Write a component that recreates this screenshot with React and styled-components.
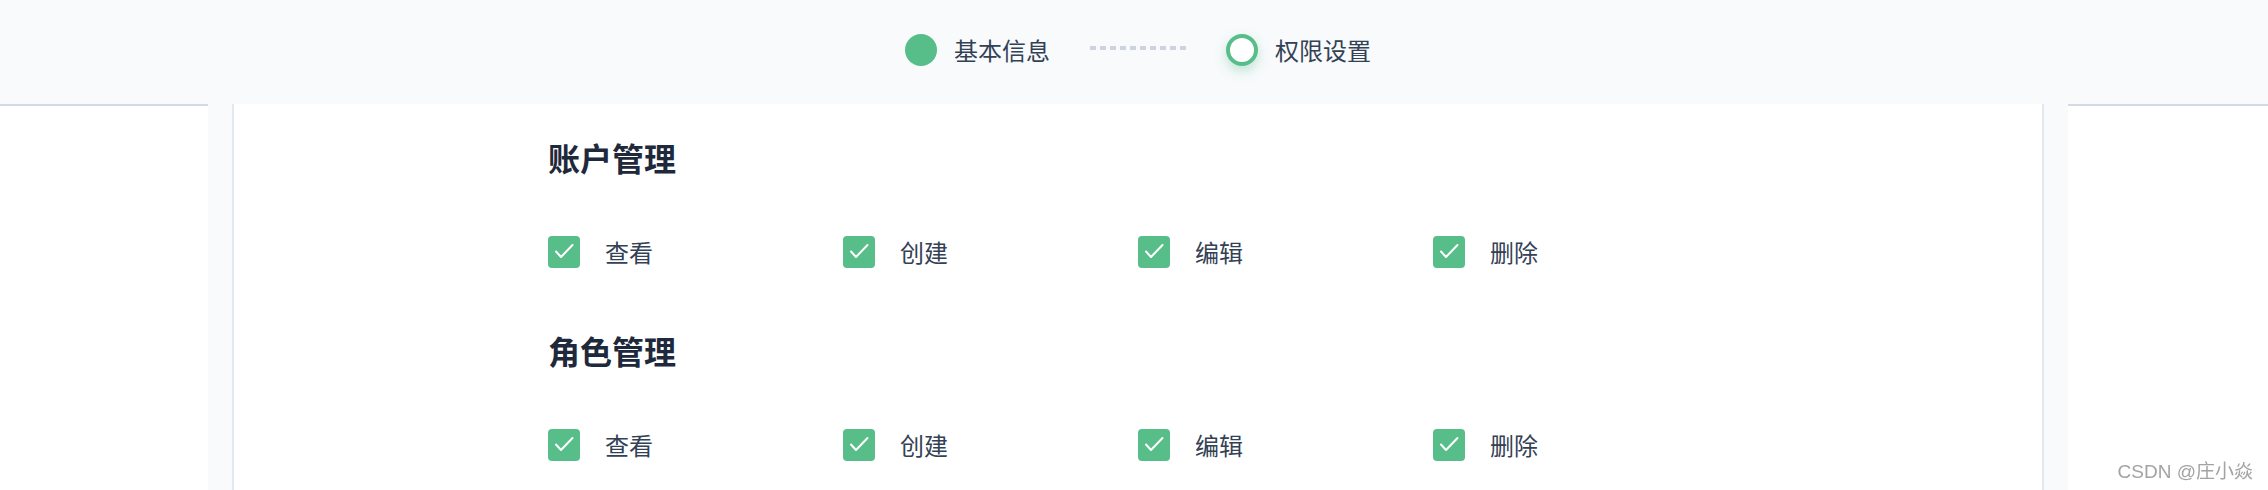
import React from "react";
import styled, { createGlobalStyle } from "styled-components";

const GREEN = "#58be89";

const Global = createGlobalStyle`
  html, body { margin: 0; padding: 0; background: #ffffff; }
  body {
    font-family: "Noto Sans CJK SC", "Noto Sans", sans-serif;
    color: #334155;
    overflow: hidden;
  }
  * { box-sizing: border-box; }
`;

const Page = styled.div`
  min-height: 100vh;
  background: #ffffff;
`;

const Header = styled.header`
  height: 104px;
  background: #f8fafc;
  padding: 0 200px 4px 208px;
  display: flex;
  align-items: center;
  justify-content: center;
`;

const Stepper = styled.div`
  display: flex;
  align-items: center;
  gap: 40px;
`;

const Step = styled.div`
  display: flex;
  align-items: center;
  gap: 17px;
`;

const Dot = styled.span`
  width: 32px;
  height: 32px;
  border-radius: 50%;
  flex: none;
  background: ${(p) => (p.$active ? "#ffffff" : GREEN)};
  border: ${(p) => (p.$active ? `4px solid ${GREEN}` : "none")};
  box-shadow: ${(p) => (p.$active ? "0 5px 12px rgba(88, 190, 137, 0.35)" : "none")};
`;

const StepLabel = styled.span`
  font-size: 24px;
  line-height: 32px;
  color: #334155;
`;

const Connector = styled.span`
  width: 96px;
  height: 4px;
  margin-top: -4px;
  background: repeating-linear-gradient(
    to right,
    #cdd4de 0 6px,
    transparent 6px 10px
  );
`;

const Main = styled.main`
  border-top: 2px solid #d3dae2;
  padding: 0 200px 0 208px;
  display: flex;
`;

const Panel = styled.div`
  flex: 1;
  margin-top: -2px;
  background: #f8fafc;
  padding: 0 24px;
  display: flex;
`;

const Card = styled.section`
  flex: 1;
  background: #ffffff;
  border-left: 2px solid #e2e8f0;
  border-right: 2px solid #e2e8f0;
  padding: 29px 0 80px;
  min-height: 420px;
`;

const Content = styled.div`
  width: 1180px;
  margin: 0 auto;
  display: flex;
  flex-direction: column;
  gap: 58px;
`;

const Group = styled.div`
  display: flex;
  flex-direction: column;
  gap: 55px;
`;

const GroupTitle = styled.h3`
  margin: 0;
  font-size: 32px;
  line-height: 48px;
  font-weight: 700;
  color: #1e293b;
`;

const Options = styled.div`
  display: grid;
  grid-template-columns: repeat(4, 295px);
`;

const Option = styled.label`
  display: flex;
  align-items: center;
  gap: 25px;
  height: 32px;
  cursor: pointer;
`;

const Box = styled.span`
  width: 32px;
  height: 32px;
  border-radius: 4px;
  background: ${GREEN};
  display: flex;
  align-items: center;
  justify-content: center;
  flex: none;
`;

const OptionText = styled.span`
  font-size: 24px;
  line-height: 32px;
  color: #334155;
`;

const Watermark = styled.div`
  position: fixed;
  right: 15px;
  bottom: 7px;
  font-family: "Liberation Sans", "Noto Sans CJK SC", sans-serif;
  font-size: 19px;
  color: #a3a3a3;
  text-shadow: 1px 1px 0 rgba(255, 255, 255, 0.8);
`;

const Check = () => (
  <svg width="32" height="32" viewBox="0 0 32 32" fill="none">
    <polyline
      points="8,15.5 13,21 24.5,9"
      stroke="#ffffff"
      strokeWidth="2"
      strokeLinecap="round"
      strokeLinejoin="round"
    />
  </svg>
);

const groups = [
  { title: "账户管理", perms: ["查看", "创建", "编辑", "删除"] },
  { title: "角色管理", perms: ["查看", "创建", "编辑", "删除"] },
];

export default function App() {
  return (
    <Page>
      <Global />
      <Header>
        <Stepper>
          <Step>
            <Dot />
            <StepLabel>基本信息</StepLabel>
          </Step>
          <Connector />
          <Step>
            <Dot $active />
            <StepLabel>权限设置</StepLabel>
          </Step>
        </Stepper>
      </Header>
      <Main>
        <Panel>
          <Card>
            <Content>
              {groups.map((g) => (
                <Group key={g.title}>
                  <GroupTitle>{g.title}</GroupTitle>
                  <Options>
                    {g.perms.map((p) => (
                      <Option key={p}>
                        <Box>
                          <Check />
                        </Box>
                        <OptionText>{p}</OptionText>
                      </Option>
                    ))}
                  </Options>
                </Group>
              ))}
            </Content>
          </Card>
        </Panel>
      </Main>
      <Watermark>CSDN @庄小焱</Watermark>
    </Page>
  );
}
